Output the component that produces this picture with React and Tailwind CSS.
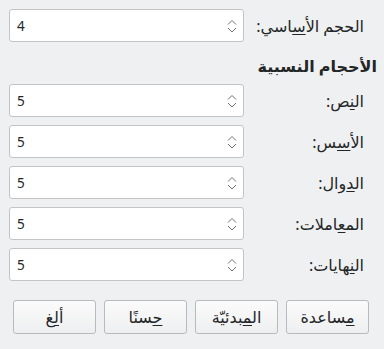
const rows = [
  { pre: "ال", u: "ن", post: "ص:" },
  { pre: "الأ", u: "س", post: "س:" },
  { pre: "ال", u: "د", post: "وال:" },
  { pre: "الم", u: "ع", post: "املات:" },
  { pre: "ال", u: "ن", post: "هايات:" },
];

const buttons = [
  { pre: "", u: "م", post: "ساعدة" },
  { pre: "ال", u: "م", post: "بدئيّة" },
  { pre: "", u: "ح", post: "سنًا" },
  { pre: "أ", u: "ل", post: "غ" },
];

const Chevrons = () => (
  <svg width="10" height="16" viewBox="0 0 10 16" className="shrink-0">
    <path d="M1 6.5 L5 2.5 L9 6.5" fill="none" stroke="#6e7173" strokeWidth="1" />
    <path d="M1 10 L5 14 L9 10" fill="none" stroke="#6e7173" strokeWidth="1" />
  </svg>
);

const SpinBox = ({ value }) => (
  <div
    dir="ltr"
    className="flex-1 h-[33px] flex items-center justify-between pl-[7px] pr-[6px] bg-white border border-[#c3c4c5] rounded-[3px] text-[13.5px]"
  >
    <span>{value}</span>
    <Chevrons />
  </div>
);

const Label = ({ pre, u, post }) => (
  <span className="whitespace-nowrap">
    {pre}
    <span className="underline underline-offset-2">{u}</span>
    {post}
  </span>
);

export default function App() {
  return (
    <div
      dir="rtl"
      className="w-[384px] h-[349px] bg-[#eff0f1] text-[#232627] text-[16px] leading-[22px] pr-[7px] pl-[9px] pt-[9px]"
      style={{ fontFamily: '"Noto Sans", "DejaVu Sans", sans-serif' }}
    >
      <div className="flex items-center gap-[16px] pr-[13px]">
        <div className="w-[104px] shrink-0 whitespace-nowrap">
          <Label pre="الحجم الأ" u="س" post="اسي:" />
        </div>
        <SpinBox value="4" />
      </div>

      <div className="mt-[14px] h-[20px] leading-[20px] font-bold whitespace-nowrap">الأحجام النسبية</div>

      <div className="mt-[8px] flex flex-col gap-[8px]">
        {rows.map((r, i) => (
          <div key={i} className="flex items-center gap-[16px] pr-[13px]">
            <div className="w-[104px] shrink-0">
              <Label {...r} />
            </div>
            <SpinBox value="5" />
          </div>
        ))}
      </div>

      <div className="mt-[19px] flex gap-[8px] pr-[8px]">
        {buttons.map((b, i) => (
          <button
            key={i}
            className="w-[83px] h-[34px] rounded-[3px] border border-[#b9babb] bg-gradient-to-b from-[#fbfbfb] to-[#eeeff0] flex items-center justify-center"
          >
            <Label {...b} />
          </button>
        ))}
      </div>
    </div>
  );
}
